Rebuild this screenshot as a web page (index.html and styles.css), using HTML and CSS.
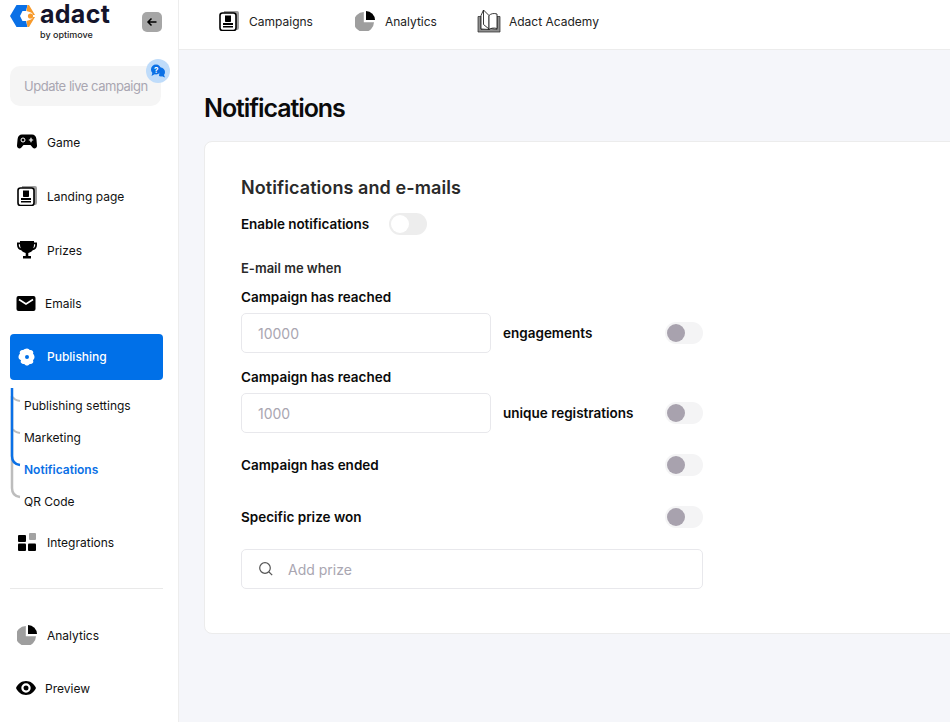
FILE: index.html
```html
<!DOCTYPE html>
<html lang="en">
<head>
<meta charset="utf-8">
<title>Notifications</title>
<link rel="stylesheet" href="styles.css">
</head>
<body>
<div class="app">
  <aside class="sidebar">
    <div class="brand">
      <svg class="logo" viewBox="0 0 25 22" width="25" height="22">
        <path d="M6.500 0H17.500L16 6H12.500L10 11l2.500 5H16L17.500 22H6.500L0 11z" fill="#0a70e6"/>
        <path d="M17.500 0H19L25 10H23a3.500 3.500 0 0 0-2-2.500L16.500 6z" fill="#f79a2c"/>
        <path d="M17.500 22H19L25 12H23a3.500 3.500 0 0 1-2 2.500L16.500 16z" fill="#f79a2c"/>
        <circle cx="20.500" cy="11" r="2.600" fill="#f79a2c"/>
      </svg>
      <div class="wordmark">
        <span class="word">adact</span>
        <span class="by">by optimove</span>
      </div>
      <button class="back" aria-label="Collapse">
        <svg viewBox="0 0 12 12" width="12" height="12"><path d="M10.500 6H2M5.500 2.500 2 6l3.500 3.500" fill="none" stroke="#000" stroke-width="1.500"/></svg>
      </button>
    </div>
    <div class="update">
      <span>Update live campaign</span>
      <span class="help">
        <svg viewBox="0 0 16 14" width="16" height="14">
          <path d="M10 3.500a4.500 4.500 0 0 1 5 4.500c0 1.200-.4 2.200-1 3l1 2.500-3-1.200c-1 .3-2 .2-3-.3z" fill="#0a70e6"/>
          <circle cx="6" cy="5.500" r="5" fill="#0a70e6"/>
          <path d="M2.500 8.500 1.500 12l3.500-2z" fill="#0a70e6"/>
          <text x="6" y="8.500" class="help-q">?</text>
        </svg>
      </span>
    </div>
    <nav class="nav">
      <a class="item">
        <svg class="ico" viewBox="0 0 20 16" width="20" height="16"><path d="M5 .5h10c2.500 0 4 1.500 4.400 4.500l.6 6.500c.2 2.500-2.600 4-4.200 2.200L13.500 11h-7l-2.300 2.700C2.600 15.500-.2 14 0 11.500L.6 5C1 2 2.500.5 5 .5z"/><circle cx="6" cy="6" r="2" fill="none" stroke="#fff" stroke-width="1"/><path d="M14 3.800v4.400M11.800 6h4.400" stroke="#fff" stroke-width="1.200"/></svg>
        <span>Game</span>
      </a>
      <a class="item">
        <svg class="ico" viewBox="0 0 20 20" width="20" height="20"><use href="#card"/></svg>
        <span>Landing page</span>
      </a>
      <a class="item short">
        <svg class="ico" viewBox="0 0 20 18" width="20" height="18"><path d="M3 0h14v1.500h3V4c0 3-2 5-4.300 5.300C14.700 10.800 13 11.700 11.300 12v3H14v2.500H6V15h2.700v-3c-1.700-.3-3.400-1.200-4.400-2.700C2 9 0 7 0 4V1.500h3zM1.800 3.300V4c0 1.500.8 2.700 1.900 3.200C3.300 6 3 5 3 3.300zm16.400 0H17c0 1.700-.3 2.700-.7 3.900 1.100-.5 1.900-1.700 1.900-3.200z"/></svg>
        <span>Prizes</span>
      </a>
      <a class="item tight">
        <svg class="ico" viewBox="0 0 19 15" width="19" height="15"><rect width="19" height="15" rx="2"/><path d="M2.500 3.500 9.500 8l7-4.500" fill="none" stroke="#fff" stroke-width="1.600"/></svg>
        <span>Emails</span>
      </a>
      <a class="item active">
        <svg class="ico" viewBox="0 0 18 18" width="18" height="18"><path fill="#fff" fill-rule="evenodd" d="M9 .5c1.300 0 2.200.9 2.700 1.600 1-.2 2.200-.2 3 .8.900 1 .6 2.100.3 2.900.7.700 1.500 1.700 1.500 3.200s-.8 2.500-1.500 3.200c.3.800.6 1.900-.3 2.900-.8 1-2 1-3 .8-.5.700-1.400 1.600-2.700 1.600s-2.200-.9-2.700-1.600c-1 .2-2.200.2-3-.8-.9-1-.6-2.100-.3-2.900C1.300 11.500.5 10.500.5 9s.8-2.500 1.500-3.200c-.3-.8-.6-1.900.3-2.900.8-1 2-1 3-.8C5.800 1.400 7.700.5 9 .5zM9 7a2 2 0 1 0 0 4 2 2 0 0 0 0-4z"/></svg>
        <span>Publishing</span>
      </a>
      <div class="sub">
        <svg class="tree" viewBox="0 0 14 112" width="14" height="112">
          <path d="M2 8 2 100Q2 108 10 109" fill="none" stroke="#bdbdbd" stroke-width="2.500"/>
          <path d="M3 9Q4 12 10 13M3 41Q4 44 10 45" fill="none" stroke="#bdbdbd" stroke-width="2"/>
          <path d="M2 0V68Q2 76 10 77" fill="none" stroke="#0a70e6" stroke-width="2.500"/>
        </svg>
        <a class="subitem">Publishing settings</a>
        <a class="subitem">Marketing</a>
        <a class="subitem current">Notifications</a>
        <a class="subitem">QR Code</a>
      </div>
      <a class="item">
        <svg class="ico" viewBox="0 0 18 18" width="18" height="18"><rect y="2" width="8" height="7" rx="1"/><rect x="11" width="7" height="7" rx="1" fill="#a3a3a3"/><rect y="10.500" width="8" height="7.500" rx="1"/><rect x="10" y="10.500" width="8" height="7.500" rx="1"/></svg>
        <span>Integrations</span>
      </a>
      <hr class="divider">
      <a class="item">
        <svg class="ico" viewBox="0 0 20 20" width="20" height="20"><use href="#pie"/></svg>
        <span>Analytics</span>
      </a>
      <a class="item tight wide-ico">
        <svg class="ico" viewBox="0 0 20 14" width="20" height="14"><path fill-rule="evenodd" d="M10 0c4.500 0 8.200 2.800 10 7-1.800 4.200-5.500 7-10 7S1.800 11.200 0 7c1.800-4.200 5.500-7 10-7zm0 2.300a4.700 4.700 0 1 0 0 9.400 4.700 4.700 0 0 0 0-9.400zM10 4.500a2.500 2.500 0 1 1 0 5 2.500 2.500 0 0 1 0-5z"/></svg>
        <span>Preview</span>
      </a>
    </nav>
  </aside>
  <div class="content">
    <header class="topbar">
      <a class="tab">
        <svg viewBox="0 0 20 20" width="20" height="20"><use href="#card"/></svg>
        <span>Campaigns</span>
      </a>
      <a class="tab">
        <svg viewBox="0 0 20 20" width="20" height="20"><use href="#pie"/></svg>
        <span>Analytics</span>
      </a>
      <a class="tab">
        <svg viewBox="0 0 24 24" width="24" height="24">
          <path d="M1 23V7.500h3v13l7-1.200 1 1.200 1-1.200 7 1.200v-13h3V23z" fill="#8f8f8f" stroke="#222" stroke-width=".7"/>
          <path d="M4 20V6.500L6.500 1l5.500 5.500v14z M6.500 1v14.500L12 20" fill="#fff" stroke="#222" stroke-width=".9"/>
          <path d="M12 6.500c2-2 5-2.500 8-1.500v14.500c-3-.8-6-.5-8 1z" fill="#fff" stroke="#222" stroke-width=".9"/>
        </svg>
        <span>Adact Academy</span>
      </a>
    </header>
    <main class="main">
      <h1 class="title">Notifications</h1>
      <section class="card">
        <h2 class="card-title">Notifications and e-mails</h2>
        <div class="enable">
          <span class="label enable-label">Enable notifications</span>
          <span class="toggle master"><i></i></span>
        </div>
        <div class="caption">E-mail me when</div>
        <div class="form">
          <div class="label reach">Campaign has reached</div>
          <div class="row">
            <div class="field short-field">10000</div>
            <span class="label unit">engagements</span>
            <span class="toggle"><i></i></span>
          </div>
          <div class="label reach">Campaign has reached</div>
          <div class="row">
            <div class="field short-field">1000</div>
            <span class="label unit">unique registrations</span>
            <span class="toggle"><i></i></span>
          </div>
          <div class="row line first-line">
            <span class="label">Campaign has ended</span>
            <span class="toggle"><i></i></span>
          </div>
          <div class="row line">
            <span class="label">Specific prize won</span>
            <span class="toggle"><i></i></span>
          </div>
          <div class="field search">
            <svg viewBox="0 0 16 16" width="16" height="16"><circle cx="7" cy="7" r="5.300" fill="none" stroke="#555" stroke-width="1.200"/><path d="m11 11 3.200 3.200" stroke="#555" stroke-width="1.200"/></svg>
            <span>Add prize</span>
          </div>
        </div>
      </section>
    </main>
  </div>
</div>
<svg class="defs" width="0" height="0" aria-hidden="true">
  <defs>
    <g id="card">
      <path d="M5 0h13a2 2 0 0 1 2 2v15a2 2 0 0 1-2 2H16V3a1 1 0 0 0-1-1H4.800z" fill="#9e9e9e"/>
      <rect x="1" y="2" width="16" height="17.500" rx="2.500" fill="#fff" stroke="#000" stroke-width="1.600"/>
      <path d="M6 4.500h6v5.500c0 .6-.4 1-1 1H7c-.6 0-1-.4-1-1zM4 12h10v2H4zM4 15h10v1.500H4z"/>
    </g>
    <g id="pie">
      <path d="M8.800 1v10.200H19A10 10 0 1 1 8.800 1z" fill="#9e9e9e"/>
      <path d="M11 0a9 9 0 0 1 9 9h-9z"/>
    </g>
  </defs>
</svg>
</body>
</html>
```
FILE: styles.css
```css
* { box-sizing: border-box; }
html, body { margin: 0; height: 100%; overflow: hidden; }
body { font-family: Inter, "Liberation Sans", sans-serif; color: #111; background: #fff; }
.defs { display: block; width: 0; height: 0; overflow: hidden; }
.app { display: flex; width: 950px; height: 722px; overflow: hidden; }

.sidebar { flex: 0 0 179px; width: 179px; height: 722px; border-right: 1px solid #ededed; padding: 0 16px 0 10px; background: #fff; }
.brand { display: flex; align-items: flex-start; height: 66px; }
.logo { margin-top: 5px; flex: none; }
.wordmark { display: flex; flex-direction: column; margin-left: 5px; }
.word { font-size: 25px; font-weight: 700; line-height: 29px; color: #14142b; letter-spacing: .3px; }
.by { font-size: 9px; line-height: 11px; font-weight: 500; color: #222; }
.back { margin: 12px 0 0 auto; width: 20px; height: 20px; border: 0; padding: 0; border-radius: 5px; background: #a6a6a6; display: flex; align-items: center; justify-content: center; }

.update { position: relative; height: 40px; width: 151px; border-radius: 10px; background: #f5f5f5; color: #a9a6b1; font-size: 13px; display: flex; align-items: center; padding-left: 14px; letter-spacing: -.48px; white-space: nowrap; }
.help { position: absolute; right: -9px; top: -7px; width: 24px; height: 24px; border-radius: 50%; background: #bfdcfa; display: flex; align-items: center; justify-content: center; }
.help-q { font-size: 8px; font-weight: 700; fill: #fff; text-anchor: middle; font-family: Inter, sans-serif; }

.nav { display: flex; flex-direction: column; margin-top: 13px; width: 153px; }
.item { height: 46px; margin-bottom: 8px; display: flex; align-items: center; padding-left: 7px; gap: 10px; font-size: 12px; color: #111; }
.item.short { margin-bottom: 7px; }
.item.tight { gap: 9px; padding-left: 6px; }
.item.wide-ico { margin-bottom: 0; margin-top: -1px; }
.ico { flex: none; }
.item .ico { width: 20px; }
.item.active { background: #0070e8; color: #fff; border-radius: 4px; font-weight: 500; margin-bottom: 9px; padding-bottom: 1px; }
.sub { position: relative; display: flex; flex-direction: column; padding-left: 14px; margin-bottom: 2px; }
.tree { position: absolute; left: 0; top: -1px; }
.subitem { height: 32px; display: flex; align-items: center; font-size: 12px; color: #111; }
.subitem.current { color: #0a70e6; font-weight: 600; }
.divider { width: 153px; border: 0; border-top: 1px solid #e9e9e9; margin: 15px 0 23px; }

.content { flex: 1; min-width: 0; display: flex; flex-direction: column; background: #f5f6fa; }
.topbar { height: 50px; background: #fff; border-bottom: 1px solid #ececec; display: flex; align-items: center; padding: 0 0 7px 40px; gap: 42px; flex: none; }
.tab { display: flex; align-items: center; gap: 10px; font-size: 12px; color: #222; }
.tab:nth-child(3) { gap: 8px; margin-left: -2px; }

.main { padding: 0 0 0 25px; }
.title { margin: 43px 0 17px; font-size: 25px; line-height: 31px; font-weight: 600; letter-spacing: -1.080px; color: #0b0b0b; }
.card { width: 800px; height: 493px; background: #fff; border: 1px solid #ececec; border-radius: 8px; padding: 35px 0 0 36px; }
.card-title { margin: 0; font-size: 18px; line-height: 21px; font-weight: 600; color: #2a2a2a; letter-spacing: .08px; }
.enable { display: flex; align-items: center; gap: 20px; margin-top: 15px; height: 22px; }
.label { font-size: 13.500px; font-weight: 600; color: #0a0a0a; white-space: nowrap; }
.enable-label { letter-spacing: -.05px; }
.caption { font-size: 13px; font-weight: 600; color: #2a2a2a; line-height: 16px; margin-top: 25px; }
.form { width: 462px; margin-top: 13px; }
.reach { line-height: 16px; margin-bottom: 8px; }
.row { display: flex; align-items: center; height: 40px; margin-bottom: 16px; }
.field { height: 40px; border: 1px solid #e8e8ec; border-radius: 5px; display: flex; align-items: center; background: #fff; color: #a9a6b1; font-size: 14px; }
.short-field { width: 250px; padding-left: 16px; }
.unit { margin-left: 12px; }
.row .toggle { margin-left: auto; }
.line { height: 22px; margin-bottom: 30px; }
.first-line { margin-top: 21px; }
.toggle { width: 38px; height: 22px; border-radius: 11px; background: #f4f4f5; position: relative; display: inline-block; flex: none; }
.toggle i { position: absolute; left: 2px; top: 2px; width: 18px; height: 18px; border-radius: 50%; background: #a8a2ae; }
.toggle.master { background: #ededed; }
.toggle.master i { background: #fff; }
.search { margin-top: -9px; padding-left: 16px; gap: 14px; }
```
